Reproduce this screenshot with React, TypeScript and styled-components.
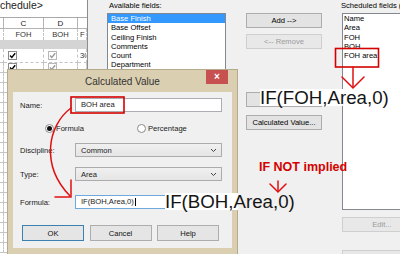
import React from "react";
import styled, { createGlobalStyle } from "styled-components";

const availableFields = [
  "Base Finish",
  "Base Offset",
  "Ceiling Finish",
  "Comments",
  "Count",
  "Department",
];
const scheduledFields = ["Name", "Area", "FOH", "BOH", "FOH area"];
const sheetRows = Array.from({ length: 20 }, (_, i) => i);

const GlobalStyle = createGlobalStyle`
  html, body { margin: 0; padding: 0; background: #fff; overflow: hidden; }
  body { font-family: "Liberation Sans", Arial, sans-serif; }
`;

const Desktop = styled.div`
  position: relative;
  width: 400px;
  height: 254px;
  overflow: hidden;
  display: flex;
  background: #fff;
  color: #1a1a1a;
  font-family: "Liberation Sans", Arial, sans-serif;
`;

/* ---------- schedule sheet behind ---------- */

const SchedulePane = styled.div`
  width: 87px;
  flex: none;
  border-right: 1px solid #8c8c8c;
  display: flex;
  flex-direction: column;
  overflow: hidden;
  background: #fff;
`;

const ScheduleTitle = styled.div`
  height: 17px;
  font-size: 10.5px;
  line-height: 10px;
  white-space: nowrap;
  color: #222;
`;

const SheetGrid = styled.div`
  display: grid;
  grid-template-columns: 4px 40px 34px 1fr;
  grid-template-rows: 11px 11px 9px 14px;
  grid-auto-rows: 10px;
  border-top: 1px solid #a8a8a8;
  font-size: 7.6px;
`;

const LetterCell = styled.div<{ $last?: boolean }>`
  display: flex;
  align-items: center;
  justify-content: center;
  border-right: ${({ $last }) => ($last ? "none" : "1px solid #b4b4b4")};
  border-bottom: 1px solid #b4b4b4;
  font-size: 8px;
  color: #222;
`;

const HeadCell = styled.div<{ $left?: boolean }>`
  display: flex;
  align-items: center;
  justify-content: ${({ $left }) => ($left ? "flex-start" : "center")};
  padding-left: ${({ $left }) => ($left ? "2px" : "0")};
  border-right: 1px dashed #c4c4c4;
  color: #333;
  white-space: nowrap;
  overflow: hidden;
`;

const Band = styled.div`
  grid-column: 1 / -1;
  background: #d4d4d4;
`;

const DataCell = styled.div<{ $pad?: number }>`
  display: flex;
  align-items: center;
  padding-left: ${({ $pad }) => $pad ?? 0}px;
  border-right: 1px dashed #c4c4c4;
  border-bottom: 1px dashed #c4c4c4;
  color: #333;
  white-space: nowrap;
  overflow: hidden;
`;

const CheckBox = styled.span<{ $muted?: boolean }>`
  width: 7px;
  height: 7px;
  border: 1px solid ${({ $muted }) => ($muted ? "#b8b8b8" : "#8a8a8a")};
  background: #fff;
  display: flex;
  align-items: center;
  justify-content: center;
  color: ${({ $muted }) => ($muted ? "#9a9a9a" : "#000")};
`;

const Check = () => (
  <svg width="7" height="7" viewBox="0 0 7 7">
    <path d="M1 3.6 L2.8 5.4 L6.2 1.2" fill="none" stroke="currentColor" strokeWidth="1.4" />
  </svg>
);

/* ---------- schedule properties dialog (fields tab) ---------- */

const PropertiesPane = styled.div`
  flex: 1;
  background: #f0f0f0;
  display: grid;
  grid-template-columns: 119px 76px 80px;
  column-gap: 20px;
  padding-left: 19px;
  font-size: 7.6px;
  color: #000;
`;

const FieldColumn = styled.div`
  display: flex;
  flex-direction: column;
  min-width: 0;
`;

const FieldLabel = styled.div<{ $inset: number }>`
  height: 13px;
  line-height: 11px;
  margin-left: ${({ $inset }) => $inset}px;
  white-space: nowrap;
`;

const ListBox = styled.div<{ $height: number; $pad: number }>`
  height: ${({ $height }) => $height}px;
  flex: none;
  box-sizing: border-box;
  background: #fff;
  border: 1px solid #828790;
  overflow: hidden;
  & > div {
    padding-left: ${({ $pad }) => $pad}px;
  }
`;

const ListRow = styled.div<{ $selected?: boolean }>`
  height: 9.3px;
  line-height: 9.3px;
  white-space: nowrap;
  background: ${({ $selected }) => ($selected ? "#3399ff" : "transparent")};
  color: ${({ $selected }) => ($selected ? "#fff" : "#000")};
`;

const ButtonColumn = styled.div`
  display: flex;
  flex-direction: column;
  padding-top: 13px;
`;

const PushButton = styled.button<{ $gap?: number; $muted?: boolean }>`
  height: 15px;
  flex: none;
  margin: ${({ $gap }) => $gap ?? 0}px 0 0;
  padding: 0;
  box-sizing: border-box;
  border: 1px solid ${({ $muted }) => ($muted ? "#cfcfcf" : "#adadad")};
  background: ${({ $muted }) => ($muted ? "#e8e8e8" : "#e3e3e3")};
  color: ${({ $muted }) => ($muted ? "#9b9b9b" : "#000")};
  font-family: inherit;
  font-size: 7.6px;
  display: flex;
  align-items: center;
  justify-content: center;
  white-space: nowrap;
`;

/* ---------- calculated value dialog ---------- */

const Dialog = styled.div`
  position: absolute;
  left: 7px;
  top: 69px;
  width: 231px;
  height: 186px;
  box-sizing: border-box;
  background: #dbcfb1;
  border: 1px solid #b5aa8c;
  display: flex;
  flex-direction: column;
`;

const TitleBar = styled.div`
  height: 22px;
  flex: none;
  display: grid;
  grid-template-columns: 1fr auto 1fr;
  align-items: center;
`;

const TitleText = styled.div`
  grid-column: 2;
  font-size: 10px;
  color: #333;
  white-space: nowrap;
  margin-top: 1px;
`;

const CloseButton = styled.div`
  grid-column: 3;
  justify-self: end;
  align-self: start;
  width: 22px;
  height: 14px;
  margin-right: 9px;
  background: #c75050;
  color: #fff;
  font-size: 10px;
  line-height: 13px;
  text-align: center;
  font-weight: bold;
`;

const DialogBody = styled.div`
  flex: 1;
  margin: 0 5px 6px;
  background: #f0f0f0;
  padding: 6px 0 0 7px;
  font-size: 7.6px;
  color: #1a1a1a;
`;

const FormRow = styled.div<{ $gap: number }>`
  display: grid;
  grid-template-columns: 55px 147px;
  align-items: center;
  height: 14px;
  margin-top: ${({ $gap }) => $gap}px;
`;

const TextInput = styled.div<{ $focused?: boolean }>`
  height: 14px;
  box-sizing: border-box;
  border: 1px solid ${({ $focused }) => ($focused ? "#6fa8dc" : "#abadb3")};
  background: #fff;
  padding-left: 5px;
  line-height: 12px;
  white-space: nowrap;
  display: flex;
  align-items: center;
`;

const Caret = styled.span`
  width: 1px;
  height: 8px;
  background: #000;
  margin-left: 1px;
`;

const SelectBox = styled.div`
  height: 14px;
  box-sizing: border-box;
  border: 1px solid #acacac;
  background: linear-gradient(#f0f0f0, #e5e5e5);
  padding: 0 4px 0 5px;
  display: flex;
  align-items: center;
  justify-content: space-between;
`;

const RadioRow = styled.div`
  display: grid;
  grid-template-columns: 92px auto;
  align-items: center;
  height: 12px;
  margin-top: 10px;
  padding-left: 25px;
`;

const RadioOption = styled.div`
  display: flex;
  align-items: center;
  gap: 2px;
`;

const RadioDot = styled.span<{ $on?: boolean }>`
  width: 9px;
  height: 9px;
  box-sizing: border-box;
  border-radius: 50%;
  border: 1px solid #8a8a8a;
  background: #fff;
  display: flex;
  align-items: center;
  justify-content: center;
  &::after {
    content: "";
    width: 5px;
    height: 5px;
    border-radius: 50%;
    background: ${({ $on }) => ($on ? "#111" : "transparent")};
  }
`;

const ButtonRow = styled.div`
  display: flex;
  gap: 5.5px;
  margin-top: 16px;
  padding-left: 2px;
`;

const DialogButton = styled.button<{ $default?: boolean }>`
  width: 62px;
  height: 16px;
  padding: 0;
  box-sizing: border-box;
  border: 1px solid ${({ $default }) => ($default ? "#3c7fb1" : "#adadad")};
  background: #e5e5e5;
  font-family: inherit;
  font-size: 7.6px;
  color: #111;
`;

/* ---------- annotations ---------- */

const Markup = styled.svg`
  position: absolute;
  left: 0;
  top: 0;
  pointer-events: none;
`;

const FormulaCallout = styled.div<{ $x: number; $y: number; $patch?: number }>`
  position: absolute;
  left: ${({ $x }) => $x}px;
  top: ${({ $y }) => $y}px;
  font-size: 18.7px;
  line-height: 17px;
  color: #151515;
  white-space: nowrap;
  background: ${({ $patch }) =>
    $patch ? `linear-gradient(to right, #fff ${$patch}px, transparent ${$patch}px)` : "#fff"};
`;

const NoteText = styled.div`
  position: absolute;
  left: 259px;
  top: 161px;
  font-size: 12.5px;
  line-height: 12.5px;
  font-weight: bold;
  color: #d40000;
  white-space: nowrap;
`;

const Chevron = () => (
  <svg width="7" height="5" viewBox="0 0 7 5">
    <path d="M1 1 L3.5 3.5 L6 1" fill="none" stroke="#444" strokeWidth="1" />
  </svg>
);

const App = () => {
  return (
    <Desktop>
      <GlobalStyle />

      <SchedulePane>
        <ScheduleTitle>chedule&gt;</ScheduleTitle>
        <SheetGrid>
          <LetterCell />
          <LetterCell>C</LetterCell>
          <LetterCell>D</LetterCell>
          <LetterCell $last />

          <HeadCell />
          <HeadCell>FOH</HeadCell>
          <HeadCell>BOH</HeadCell>
          <HeadCell $left>F</HeadCell>

          <Band />

          {sheetRows.map((r) => (
            <React.Fragment key={r}>
              <DataCell />
              <DataCell $pad={4}>
                <CheckBox>
                  <Check />
                </CheckBox>
              </DataCell>
              <DataCell $pad={4}>
                <CheckBox $muted>
                  <Check />
                </CheckBox>
              </DataCell>
              <DataCell $pad={2}>{r === 0 ? "30" : ""}</DataCell>
            </React.Fragment>
          ))}
        </SheetGrid>
      </SchedulePane>

      <PropertiesPane>
        <FieldColumn>
          <FieldLabel $inset={2}>Available fields:</FieldLabel>
          <ListBox $height={300} $pad={3}>
            {availableFields.map((f, i) => (
              <ListRow key={f} $selected={i === 0}>
                {f}
              </ListRow>
            ))}
          </ListBox>
        </FieldColumn>

        <ButtonColumn>
          <PushButton>Add --&gt;</PushButton>
          <PushButton $gap={6} $muted>
            &lt;-- Remove
          </PushButton>
          <PushButton $gap={43} aria-label="Add Parameter" />
          <PushButton $gap={8}>Calculated Value...</PushButton>
        </ButtonColumn>

        <FieldColumn>
          <FieldLabel $inset={-1}>Scheduled fields (</FieldLabel>
          <ListBox $height={197} $pad={1}>
            {scheduledFields.map((f) => (
              <ListRow key={f}>{f}</ListRow>
            ))}
          </ListBox>
          <PushButton $gap={7} $muted>
            Edit...
          </PushButton>
          <PushButton $gap={18} $muted aria-label="Delete" />
        </FieldColumn>
      </PropertiesPane>

      <Dialog>
        <TitleBar>
          <TitleText>Calculated Value</TitleText>
          <CloseButton>×</CloseButton>
        </TitleBar>
        <DialogBody>
          <FormRow $gap={0}>
            <span>Name:</span>
            <TextInput>BOH area</TextInput>
          </FormRow>
          <RadioRow>
            <RadioOption>
              <RadioDot $on />
              <span>Formula</span>
            </RadioOption>
            <RadioOption>
              <RadioDot />
              <span>Percentage</span>
            </RadioOption>
          </RadioRow>
          <FormRow $gap={9}>
            <span>Discipline:</span>
            <SelectBox>
              <span>Common</span>
              <Chevron />
            </SelectBox>
          </FormRow>
          <FormRow $gap={10}>
            <span>Type:</span>
            <SelectBox>
              <span>Area</span>
              <Chevron />
            </SelectBox>
          </FormRow>
          <FormRow $gap={14}>
            <span>Formula:</span>
            <TextInput $focused>
              IF(BOH,Area,0)
              <Caret />
            </TextInput>
          </FormRow>
          <ButtonRow>
            <DialogButton $default>OK</DialogButton>
            <DialogButton>Cancel</DialogButton>
            <DialogButton>Help</DialogButton>
          </ButtonRow>
        </DialogBody>
      </Dialog>

      <FormulaCallout $x={260} $y={89}>
        IF(FOH,Area,0)
      </FormulaCallout>
      <FormulaCallout $x={165} $y={193} $patch={73}>
        IF(BOH,Area,0)
      </FormulaCallout>
      <NoteText>IF NOT implied</NoteText>

      <Markup width="400" height="254" viewBox="0 0 400 254">
        <g fill="none" stroke="#d40000" strokeWidth="1.6">
          <rect x="71" y="97" width="53" height="16" />
          <rect x="335.5" y="48.5" width="43" height="18.5" />
        </g>
        <g fill="none" stroke="#e01010" strokeWidth="1.5" strokeLinecap="round">
          <path d="M71 108 C48 125, 40 165, 70 196" />
          <path d="M71 180 L71 197 L55 197" />
          <path d="M353 67 L353 87" />
          <path d="M342 77 L353 88 L364 77" />
          <path d="M278 181 L278 191" />
          <path d="M270 184 L278 192 L286 184" />
        </g>
      </Markup>
    </Desktop>
  );
};

export default App;
